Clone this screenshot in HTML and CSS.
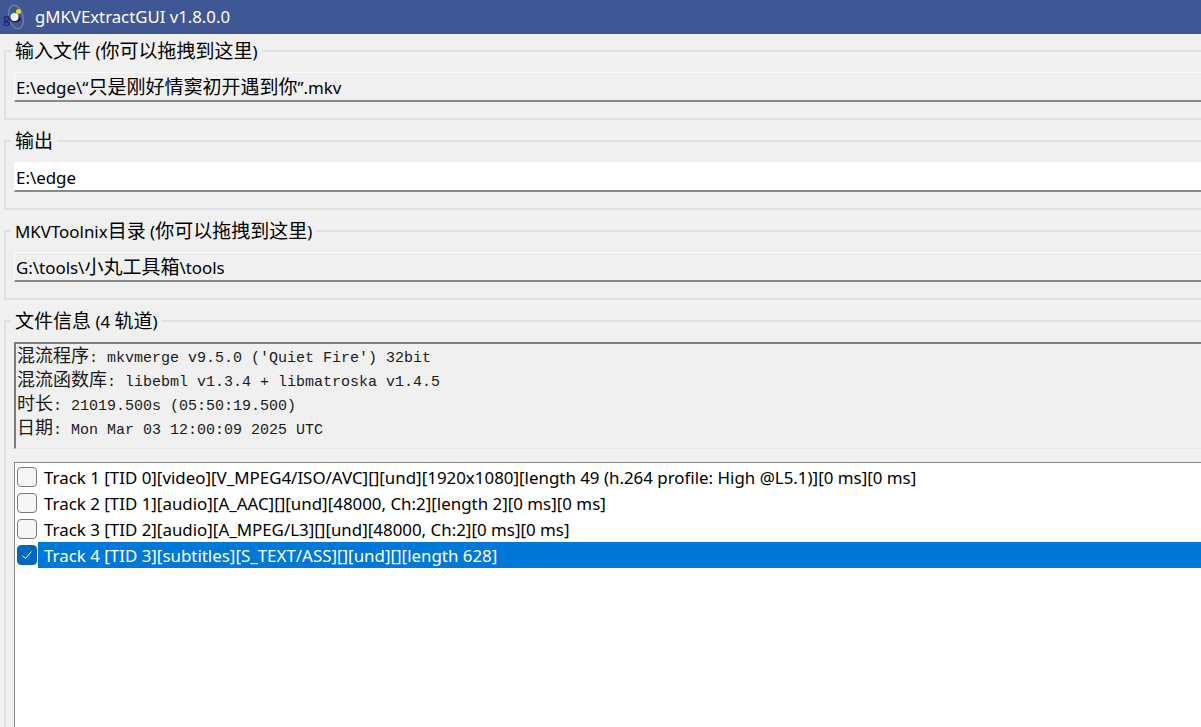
FILE: index.html
```html
<!DOCTYPE html>
<html lang="zh">
<head>
<meta charset="utf-8">
<title>gMKVExtractGUI v1.8.0.0</title>
<link rel="stylesheet" href="styles.css">
</head>
<body>
<header class="titlebar">
  <svg class="app-icon" width="26" height="28" viewBox="0 0 26 28">
    <ellipse cx="14" cy="14" rx="7" ry="12" fill="none" stroke="#6f7f9f" stroke-width="1.500" transform="rotate(-15 14 14)"/>
    <ellipse cx="13" cy="16" rx="6" ry="3.500" fill="#1e2744"/>
    <circle cx="12.500" cy="14" r="4" fill="#f4f4f4"/>
    <circle cx="16.500" cy="8.500" r="2.500" fill="#f2d521"/>
    <text x="1" y="20" class="icon-g">g</text>
  </svg>
  <span class="title">gMKVExtractGUI v1.8.0.0</span>
</header>
<main class="content">
  <fieldset class="group">
    <legend><span class="han">输入文件</span> (<span class="han">你可以拖拽到这里</span>)</legend>
    <div class="field">E:\edge\“<span class="han">只是刚好情窦初开遇到你</span>”.mkv</div>
  </fieldset>
  <fieldset class="group">
    <legend><span class="han">输出</span></legend>
    <div class="field field-white">E:\edge</div>
  </fieldset>
  <fieldset class="group">
    <legend>MKVToolnix<span class="han">目录</span> (<span class="han">你可以拖拽到这里</span>)</legend>
    <div class="field">G:\tools\<span class="han">小丸工具箱</span>\tools</div>
  </fieldset>
  <fieldset class="group group-info">
    <legend><span class="han">文件信息</span> (4 <span class="han">轨道</span>)</legend>
    <div class="info">
      <div class="info-line"><span class="cjk">混流程序</span>: mkvmerge v9.5.0 ('Quiet Fire') 32bit</div>
      <div class="info-line"><span class="cjk">混流函数库</span>: libebml v1.3.4 + libmatroska v1.4.5</div>
      <div class="info-line"><span class="cjk">时长</span>: 21019.500s (05:50:19.500)</div>
      <div class="info-line"><span class="cjk">日期</span>: Mon Mar 03 12:00:09 2025 UTC</div>
    </div>
    <ul class="tracks">
      <li class="track"><span class="check"></span><span class="label">Track 1 [TID 0][video][V_MPEG4/ISO/AVC][][und][1920x1080][length 49 (h.264 profile: High @L5.1)][0 ms][0 ms]</span></li>
      <li class="track"><span class="check"></span><span class="label">Track 2 [TID 1][audio][A_AAC][][und][48000, Ch:2][length 2][0 ms][0 ms]</span></li>
      <li class="track"><span class="check"></span><span class="label">Track 3 [TID 2][audio][A_MPEG/L3][][und][48000, Ch:2][0 ms][0 ms]</span></li>
      <li class="track selected"><span class="check checked"><svg width="12" height="10" viewBox="0 0 12 10"><path d="M1.500 5.500 L4.500 8.500 L10.500 1.500" fill="none" stroke="#fff" stroke-width="1"/></svg></span><span class="label">Track 4 [TID 3][subtitles][S_TEXT/ASS][][und][][length 628]</span></li>
    </ul>
  </fieldset>
</main>
</body>
</html>
```
FILE: styles.css
```css
* { box-sizing: border-box; }
html, body { margin: 0; height: 100%; overflow: hidden; }
body {
  width: 1201px;
  height: 727px;
  background: #f0f0f0;
  color: #000;
  font-family: "Noto Sans", "Noto Sans CJK SC", sans-serif;
  font-size: 16.900px;
}
.han { font-size: 19px; line-height: 1; }
.titlebar {
  height: 34px;
  background: #3f5795;
  display: flex;
  align-items: center;
  color: #fff;
}
.app-icon { margin-left: 2px; flex: none; }
.icon-g { font-family: "Liberation Serif", serif; font-size: 14px; font-weight: bold; fill: #1a2a80; }
.title { margin-left: 7px; font-size: 16.750px; line-height: 34px; }
.content {
  display: flex;
  flex-direction: column;
  gap: 9px;
  padding: 5px 0 0 4px;
}
.group {
  margin: 0 -30px 0 0;
  padding: 9px 0 0 8px;
  height: 81px;
  width: 1240px;
  border: 0;
  border-top: 2px solid #e0e0e0;
  border-left: 2px solid #e0e0e0;
  border-bottom: 2px solid #e0e0e0;
  min-width: 0;
}
.group legend {
  padding: 0 4px;
  margin-left: -3px;
  height: 24px;
  line-height: 26px;
}
.field {
  height: 30px;
  line-height: 30px;
  padding-left: 1px;
  border-bottom: 2px solid #8a8a8a;
  border-top: 1px solid #fbfbfb;
  border-left: 1px solid #fbfbfb;
}
.field-white { background: #fff; border-top-color: #fff; }
.group-info { height: 430px; border-bottom: 0; }
.info {
  height: 107px;
  border: 2px solid #7c7c7c;
  border-right: 0;
  border-bottom: 1px solid #e6e6e6;
  padding: 3px 0 0 1px;
  font-family: "Liberation Mono", "Noto Sans CJK SC", monospace;
  font-size: 15px;
  color: #1a1a1a;
}
.info-line { height: 24px; line-height: 24px; }
.cjk { font-size: 18px; line-height: 1; }
.tracks {
  list-style: none;
  margin: 13px 0 0;
  padding: 1px 0 0 2px;
  height: 300px;
  background: #fff;
  border: 1px solid #828790;
  border-right: 0;
}
.track {
  height: 26px;
  display: flex;
  align-items: center;
}
.check {
  width: 20px;
  height: 20px;
  margin-right: 1px;
  border: 1px solid #7a7a7a;
  border-radius: 4px;
  background: #f6f6f6;
  flex: none;
  display: flex;
  align-items: center;
  justify-content: center;
}
.checked { background: #0067c0; border-color: #0067c0; }
.label { flex: 1; height: 26px; line-height: 28px; padding-left: 6px; white-space: nowrap; }
.selected .label { background: #0078d7; color: #fff; }
```
